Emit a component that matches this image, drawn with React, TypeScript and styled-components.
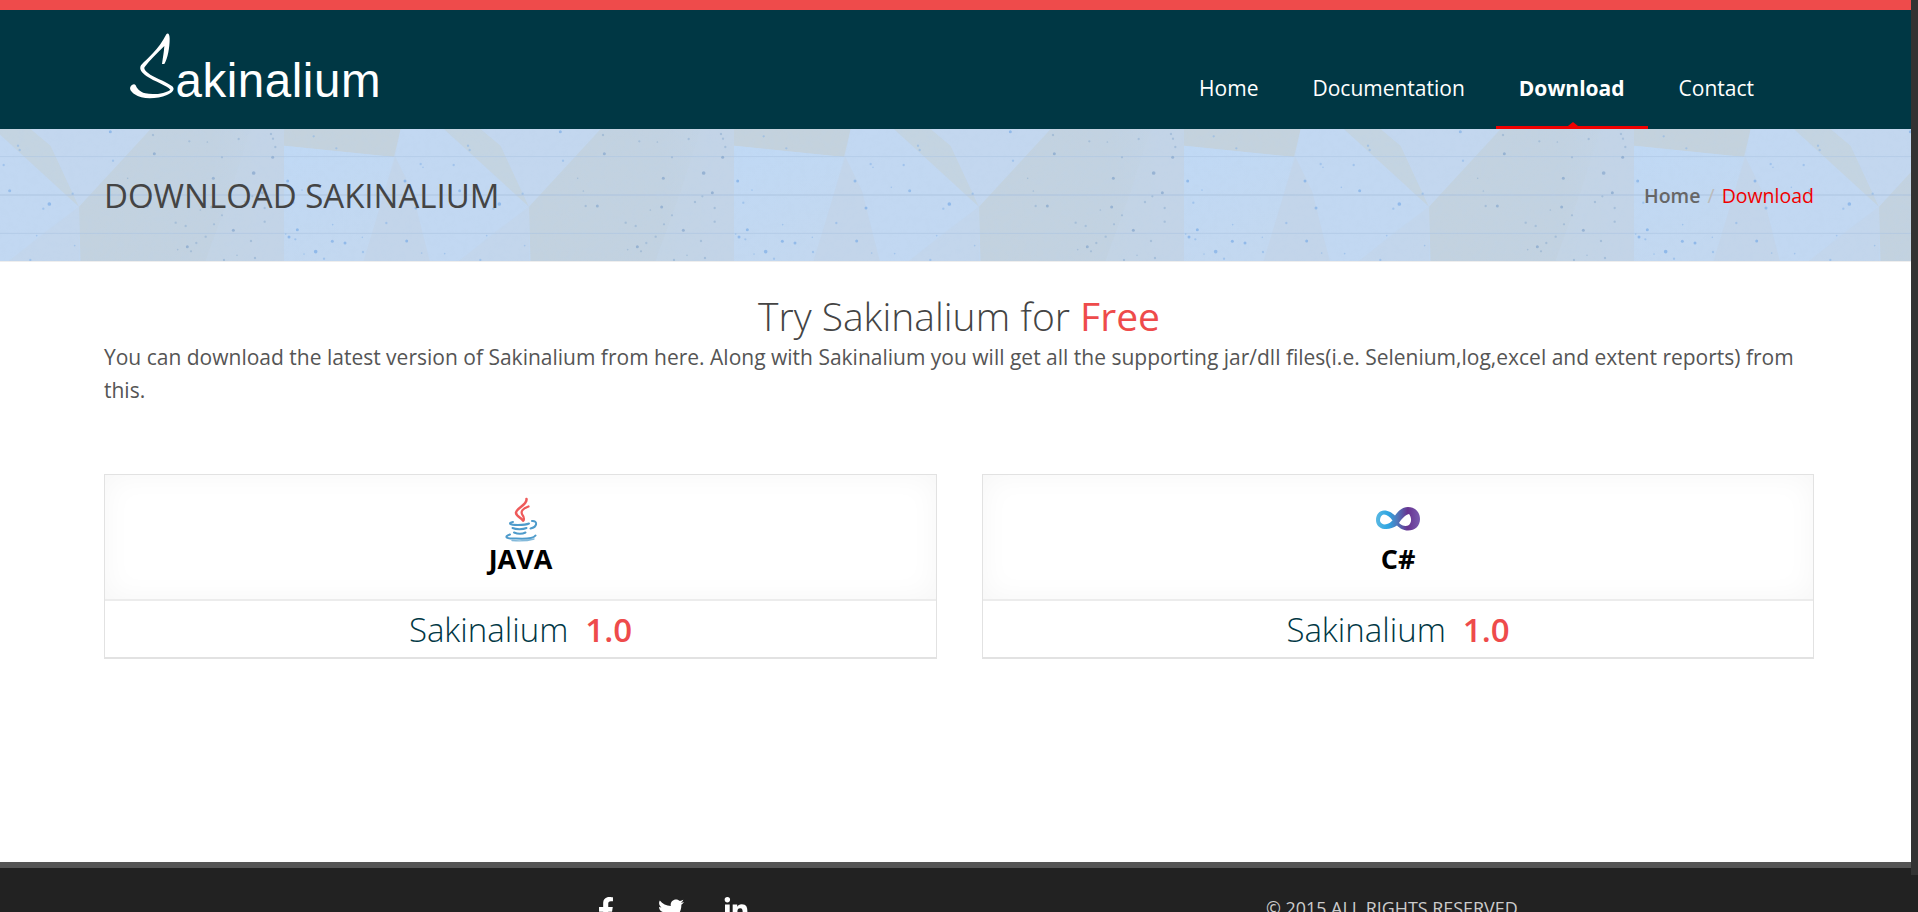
import React from "react";
import styled, { createGlobalStyle } from "styled-components";
import { FaFacebookF, FaTwitter, FaLinkedinIn } from "react-icons/fa";

const GlobalStyle = createGlobalStyle`
  * { box-sizing: border-box; }
  html, body { margin: 0; padding: 0; overflow: hidden; background: #222; }
  body { font-family: "Open Sans", "Noto Sans", sans-serif; color: #444; }
  h1, h2, h3, p { margin: 0; font-weight: 400; }
  a { color: inherit; text-decoration: none; }
`;

const Window = styled.div`
  display: flex;
  height: 912px;
  overflow: hidden;
  background: #222;
`;

const Page = styled.div`
  flex: 1;
  display: flex;
  flex-direction: column;
  background: #fff;
`;

const ScrollThumb = styled.div`
  width: 7px;
  height: 875px;
  background: #333;
`;

const Header = styled.header`
  display: flex;
  justify-content: space-between;
  height: 129px;
  padding: 0 134px 0 124px;
  border-top: 10px solid #ee4b4b;
  background: #003744;
`;

const Logo = styled.svg`
  display: block;
  width: 264px;
  height: 80px;
  margin-top: 18px;
`;

const Nav = styled.nav`
  display: flex;
  align-items: stretch;
  gap: 8px;
`;

const NavLink = styled.a<{ $active?: boolean }>`
  position: relative;
  padding: 60px 23px 0 23px;
  font-size: 21px;
  line-height: 36px;
  font-weight: ${(p) => (p.$active ? 700 : 400)};
  color: #fff;
  border-bottom: 3px solid ${(p) => (p.$active ? "#f00000" : "transparent")};
`;

const NavArrow = styled.span`
  position: absolute;
  left: 50%;
  bottom: 0;
  margin-left: -4px;
  border: 5px solid transparent;
  border-top: 0;
  border-bottom: 4px solid #f00000;
`;

const Banner = styled.section`
  position: relative;
  display: flex;
  align-items: center;
  justify-content: space-between;
  height: 133px;
  padding: 1px 97px 0 104px;
  background: #c2d5ec;
  border-bottom: 1px solid #eeeeee;
`;

const BannerArt = styled.svg`
  position: absolute;
  inset: 0;
  width: 100%;
  height: 100%;
`;

const BannerTitle = styled.h1`
  position: relative;
  font-size: 33px;
  line-height: 40px;
`;

const Crumbs = styled.div`
  position: relative;
  display: flex;
  gap: 7px;
  font-size: 19.5px;
  line-height: 30px;
`;

const Crumb = styled.span<{ $tone: string; $weight?: number }>`
  color: ${(p) => p.$tone};
  font-weight: ${(p) => p.$weight ?? 400};
`;

const Main = styled.main`
  height: 600px;
  padding: 28px 97px 0 104px;
`;

const Heading = styled.h2`
  font-size: 39px;
  line-height: 52px;
  font-weight: 300;
  text-align: center;
`;

const Accent = styled.span<{ $weight: number }>`
  color: #ee4b4b;
  font-weight: ${(p) => p.$weight};
`;

const Lead = styled.p`
  margin-top: -1px;
  font-size: 21.015px;
  line-height: 33px;
  color: #555;
`;

const Cards = styled.div`
  display: grid;
  grid-template-columns: 833px 832px;
  justify-content: space-between;
  margin-top: 67px;
`;

const Card = styled.article`
  height: 185px;
  border: 1px solid #e2e2e2;
  border-bottom-width: 2px;
`;

const CardTop = styled.div`
  display: flex;
  flex-direction: column;
  align-items: center;
  height: 126px;
  padding-top: 22px;
  border-bottom: 2px solid #ececec;
  box-shadow: inset 0 0 30px rgba(0, 0, 0, 0.04);
`;

const CardIcon = styled.svg`
  display: block;
  flex: none;
  width: 45px;
  height: 45px;
`;

const CardTitle = styled.h3`
  margin-top: -1px;
  font-size: 27px;
  line-height: 36px;
  font-weight: 700;
  color: #000;
`;

const CardVersion = styled.p`
  display: flex;
  justify-content: center;
  gap: 17px;
  font-size: 33px;
  line-height: 58px;
  font-weight: 300;
  color: #003744;
`;

const Footer = styled.footer`
  display: grid;
  grid-template-columns: 1266px 1fr;
  flex: 1;
  min-height: 0;
  overflow: hidden;
  border-top: 6px solid #555;
  background: #222;
`;

const Social = styled.div`
  display: flex;
  gap: 39px;
  padding: 29px 0 0 593px;
  font-size: 26px;
  color: #fff;
  svg { flex: none; }
`;

const Copyright = styled.p`
  padding-top: 25px;
  font-size: 17.9px;
  line-height: 30px;
  color: #ccc;
  white-space: nowrap;
`;

const specks = [
  [829, 20, 4], [552, 62, 3], [557, 75, 3], [1066, 49, 3], [1214, 42, 3], [961, 86, 4], [1316, 97, 4],
  [1164, 97, 3], [410, 117, 3], [509, 120, 3], [417, 127, 2], [11, 168, 4], [363, 168, 4], [54, 195, 2],
  [527, 197, 4], [716, 206, 3], [646, 237, 5], [628, 251, 3], [396, 249, 4], [1138, 160, 4], [1259, 144, 5],
  [1285, 203, 4], [1255, 214, 3], [1133, 246, 4], [1164, 271, 3], [1140, 298, 3], [1198, 316, 4],
  [1115, 335, 3], [1060, 365, 4], [1087, 354, 3], [1071, 379, 3], [1170, 405, 3], [1251, 348, 3],
  [1031, 374, 2], [1025, 293, 3], [1055, 303, 3], [940, 243, 4], [905, 243, 3], [40, 314, 4], [15, 336, 4],
  [145, 349, 4], [183, 354, 4], [95, 380, 5], [60, 387, 2], [120, 401, 3], [34, 343, 3], [368, 348, 4],
  [307, 294, 3], [28, 233, 3], [837, 107, 3], [1311, 27, 3], [1317, 41, 3], [1324, 66, 3], [89, 34, 3],
  [157, 70, 3], [1292, 249, 3], [1292, 290, 3], [1233, 231, 3], [1209, 391, 2], [1263, 399, 3], [237, 381, 3],
  [413, 384, 2], [608, 332, 2], [722, 362, 2], [1099, 255, 2], [898, 198, 2], [881, 160, 2], [957, 30, 3],
  [1120, 51, 2], [5, 327, 2], [235, 337, 2], [472, 187, 2], [146, 299, 2], [589, 405, 3], [482, 386, 2],
];

const BannerPattern = () => (
  <BannerArt preserveAspectRatio="none">
    <defs>
      <filter id="grain" x="0" y="0" width="100%" height="100%">
        <feTurbulence type="fractalNoise" baseFrequency="0.16" numOctaves="3" seed="4" />
        <feColorMatrix values="0 0 0 0 0.5  0 0 0 0 0.64  0 0 0 0 0.82  1 0 0 0 -0.4" />
      </filter>
      <linearGradient id="pane" x1="0" x2="0.3" y1="0" y2="1">
        <stop offset="0" stopColor="#c0d9f5" />
        <stop offset="1" stopColor="#c3d8f0" />
      </linearGradient>
      <linearGradient id="slab" x1="0" x2="1" y1="0" y2="0">
        <stop offset="0" stopColor="#c3d2df" />
        <stop offset="0.65" stopColor="#c2d2e1" />
        <stop offset="1" stopColor="#c3d5e9" />
      </linearGradient>
      <pattern id="tile" x="284" y="0" width="450" height="132" patternUnits="userSpaceOnUse">
        <g transform="scale(.33333) translate(0 -12)">
          <rect width="1350" height="420" fill="#c2d7ef" />
          <path d="M0 12H350L330 96L0 62Z" fill="#c4d2dd" />
          <path d="M0 62L330 96L238 420H0Z" fill="url(#pane)" />
          <path d="M350 12H480L735 245L640 315L510 420H440L370 170L334 96Z" fill="#c2d8f2" />
          <path d="M334 96L385 200L440 420H235Z" fill="#c3d5ea" />
          <path d="M480 12H590L650 62L735 245Z" fill="#c4d4e1" />
          <path d="M590 12H950L735 245L650 62Z" fill="#c3d7ef" />
          <path d="M735 245V420H510Z" fill="#c3d6ec" />
          <path d="M950 12H1350V420H740L735 245Z" fill="url(#slab)" />
          <path d="M1250 12H1350V420H1110L1190 200Z" fill="#c4d5e8" opacity=".7" />
          <path d="M0 95H1350M0 325H1350" stroke="#a9c3e2" strokeWidth="3" opacity=".6" />
          <path d="M0 210H1350" stroke="#a9c2de" strokeWidth="5" opacity=".6" />
          {specks.map(([x, y, r], i) => (
            <circle key={i} cx={x} cy={y} r={r + 0.5} fill={x > 860 ? "#86a7cc" : "#7eaee6"} opacity={r > 3 ? 0.75 : 0.5} />
          ))}
        </g>
      </pattern>
    </defs>
    <rect width="100%" height="100%" fill="url(#tile)" />
    <rect width="100%" height="100%" filter="url(#grain)" opacity=".4" />
  </BannerArt>
);

const JavaIcon = () => (
  <CardIcon viewBox="0 0 45 45" fill="none" strokeLinecap="round">
    <g stroke="#ee5a5a">
      <path d="M28.500 2C29.500 8 18.500 11 18 15.500C17.800 19 23 20.500 25 23.500" strokeWidth="2.5" />
      <path d="M30.500 9.500C25 11.500 22 14.500 24.500 18C26 20 26.500 21.500 25.500 23.500" strokeWidth="2.2" />
    </g>
    <g stroke="#4e9bcb" strokeWidth="2">
      <path d="M15 25C10 26 11 28 20 28C25 28 29 27.500 31 26.500" />
      <path d="M34 24C40 23.500 39.500 30 32.500 31.500" />
      <path d="M14.500 31C18 32.500 25 32.500 28.500 31M16 35.500C19.500 37 24.500 37 27.500 35.500" />
      <path d="M12 37.500C5 40 9 42 18 41.500C28 42 36 41 37.500 38.500" />
      <path d="M14 43.500C22 44.200 31 43.500 36 42" strokeWidth="1.4" opacity=".7" />
    </g>
  </CardIcon>
);

const InfinityIcon = () => (
  <CardIcon viewBox="1 0 45 45">
    <defs>
      <linearGradient id="loop" x1="0" x2="1" y1="0" y2="0">
        <stop offset="0" stopColor="#5ab8e2" />
        <stop offset=".28" stopColor="#2fa6e2" />
        <stop offset=".5" stopColor="#5273b8" />
        <stop offset=".72" stopColor="#673390" />
        <stop offset="1" stopColor="#7a5bb0" />
      </linearGradient>
    </defs>
    <path
      fillRule="evenodd"
      fill="url(#loop)"
      d="M9 13.500C14 13.500 17 16 20 18.500C24 13 28 10 33 10C40 10 45 15 45 22C45 29 40 33.500 33 33.500C28 33.500 24.500 31 22 28.500C18 31 14 32.500 9.500 32C4 31.500 1 27.500 1 23C1 17.500 4.500 13.500 9 13.500ZM9 17.500C6 18 5 21 5 24C6 27 9 28 12 27C14 26.500 16 25 17.500 23.500C15 20 12 17.500 9 17.500ZM34 17C30 18 26.500 22 24 26C27 29 31 30 34 28C37 25 36.500 20 34 17Z"
    />
  </CardIcon>
);

export default function App() {
  return (
    <Window>
      <GlobalStyle />
      <Page>
        <Header>
          <Logo viewBox="124 28 264 80">
            <g transform="translate(90 0) scale(.33333)" fill="#fff">
              <path d="M216 192C219 170 222 155 223 138C200 160 180 180 164 201C160 207 168 215 181 224C202 236 232 247 247 259C256 268 248 278 231 285C199 298 155 299 134 283C124 276 118 268 121 261C125 254 133 250 137 256C140 264 148 276 166 280C190 286 229 280 241 269C231 257 192 244 170 229C153 217 147 207 153 196C174 173 205 151 229 103C234 97 239 103 239 116C239 143 233 175 223 192Z" />
            </g>
            <text x="175.500" y="96.500" fontFamily="'Liberation Sans', Arial, sans-serif" fontSize="47.500" fill="#fff" textLength="205">akinalium</text>
          </Logo>
          <Nav>
            <NavLink href="#">Home</NavLink>
            <NavLink href="#">Documentation</NavLink>
            <NavLink href="#" $active>Download<NavArrow /></NavLink>
            <NavLink href="#">Contact</NavLink>
          </Nav>
        </Header>
        <Banner>
          <BannerPattern />
          <BannerTitle>DOWNLOAD SAKINALIUM</BannerTitle>
          <Crumbs>
            <Crumb $tone="#666" $weight={600}>Home</Crumb>
            <Crumb $tone="#bbb">/</Crumb>
            <Crumb $tone="#f00000">Download</Crumb>
          </Crumbs>
        </Banner>
        <Main>
          <Heading>Try Sakinalium for <Accent $weight={400}>Free</Accent></Heading>
          <Lead>
            You can download the latest version of Sakinalium from here. Along with Sakinalium you will get all the supporting jar/dll files(i.e. Selenium,log,excel and extent reports) from this.
          </Lead>
          <Cards>
            <Card>
              <CardTop><JavaIcon /><CardTitle>JAVA</CardTitle></CardTop>
              <CardVersion>Sakinalium <Accent $weight={600}>1.0</Accent></CardVersion>
            </Card>
            <Card>
              <CardTop><InfinityIcon /><CardTitle>C#</CardTitle></CardTop>
              <CardVersion>Sakinalium <Accent $weight={600}>1.0</Accent></CardVersion>
            </Card>
          </Cards>
        </Main>
        <Footer>
          <Social><FaFacebookF /><FaTwitter /><FaLinkedinIn /></Social>
          <Copyright>© 2015 ALL RIGHTS RESERVED.</Copyright>
        </Footer>
      </Page>
      <ScrollThumb />
    </Window>
  );
}
